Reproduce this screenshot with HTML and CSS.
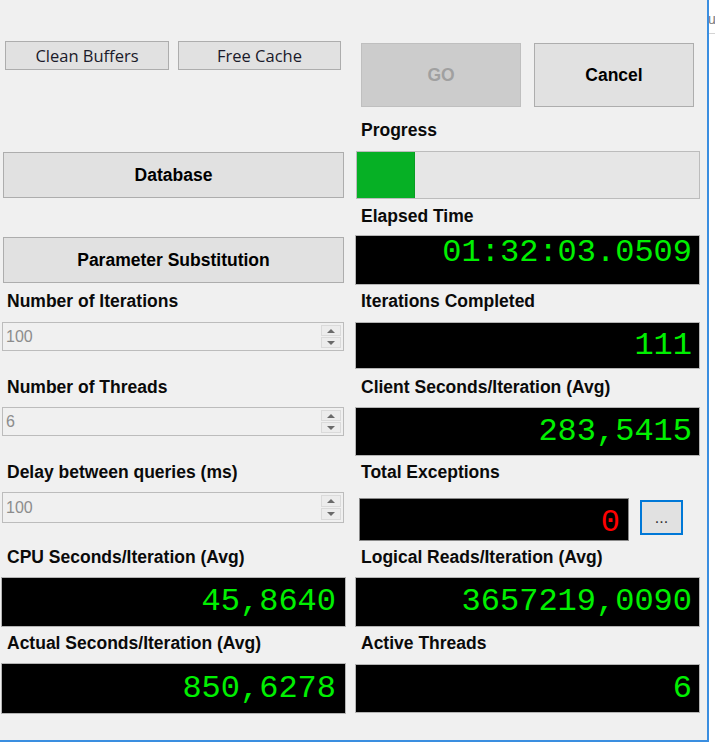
FILE: index.html
```html
<!DOCTYPE html>
<html>
<head>
<meta charset="utf-8">
<title>Stress Test</title>
<link rel="stylesheet" href="styles.css">
</head>
<body>
<div class="screen">
  <div class="window">
    <div class="col col-left">
      <div class="tool-row">
        <div class="btn btn-small btn-clean">Clean Buffers</div>
        <div class="btn btn-small btn-free">Free Cache</div>
      </div>
      <div class="btn btn-wide btn-db">Database</div>
      <div class="btn btn-wide btn-param">Parameter Substitution</div>

      <div class="label l-first">Number of Iterations</div>
      <div class="spin s-first">
        <span class="spin-val">100</span>
        <span class="spin-btns"><span class="spin-b"><i class="tri-up"></i></span><span class="spin-b"><i class="tri-down"></i></span></span>
      </div>

      <div class="label l-next">Number of Threads</div>
      <div class="spin s-next">
        <span class="spin-val">6</span>
        <span class="spin-btns"><span class="spin-b"><i class="tri-up"></i></span><span class="spin-b"><i class="tri-down"></i></span></span>
      </div>

      <div class="label l-next">Delay between queries (ms)</div>
      <div class="spin s-next s-tall">
        <span class="spin-val">100</span>
        <span class="spin-btns"><span class="spin-b"><i class="tri-up"></i></span><span class="spin-b"><i class="tri-down"></i></span></span>
      </div>

      <div class="label l-cpu">CPU Seconds/Iteration (Avg)</div>
      <div class="display d-left d-cpu">45,8640</div>

      <div class="label l-actual">Actual Seconds/Iteration (Avg)</div>
      <div class="display d-left d-actual">850,6278</div>
    </div>

    <div class="col col-right">
      <div class="run-row">
        <div class="btn btn-run btn-go">GO</div>
        <div class="btn btn-run btn-cancel">Cancel</div>
      </div>

      <div class="label r-progress">Progress</div>
      <div class="progress"><div class="progress-fill" style="width:17%"></div></div>

      <div class="label r-elapsed">Elapsed Time</div>
      <div class="display d-right d-elapsed">01:32:03.0509</div>

      <div class="label r-iter">Iterations Completed</div>
      <div class="display d-right d-iter">111</div>

      <div class="label r-client">Client Seconds/Iteration (Avg)</div>
      <div class="display d-right d-client">283,5415</div>

      <div class="label r-exc">Total Exceptions</div>
      <div class="exc-row">
        <div class="display d-exc">0</div>
        <div class="btn btn-more">...</div>
      </div>

      <div class="label r-logical">Logical Reads/Iteration (Avg)</div>
      <div class="display d-right d-logical">3657219,0090</div>

      <div class="label r-active">Active Threads</div>
      <div class="display d-right d-active">6</div>
    </div>
  </div>
  <div class="side"><span class="side-text">u</span></div>
</div>
</body>
</html>
```

FILE: styles.css
```css
* { box-sizing: border-box; }

html, body {
  margin: 0;
  padding: 0;
  background: #ffffff;
}

body {
  font-family: "Liberation Sans", Arial, sans-serif;
  color: #000;
}

.screen {
  display: flex;
  align-items: flex-start;
  width: 715px;
  height: 744px;
  overflow: hidden;
}

.window {
  width: 709px;
  height: 742px;
  flex: none;
  background: #f0f0f0;
  border-right: 2px solid #3a8ee0;
  border-bottom: 2px solid #3a8ee0;
  display: flex;
}

.side {
  flex: 1;
  height: 34px;
  border-bottom: 1px solid #d4d4d4;
  overflow: hidden;
  padding-top: 12px;
}

.side-text {
  display: block;
  font-size: 14px;
  line-height: 14px;
  color: #7a7a7a;
  margin-left: -1px;
}

.col {
  display: flex;
  flex-direction: column;
}

.col-left { width: 355px; }
.col-right { flex: 1; }

/* Buttons */
.btn {
  display: flex;
  align-items: center;
  justify-content: center;
  background: #e1e1e1;
  border: 1px solid #adadad;
  color: #000;
  white-space: nowrap;
}

.tool-row {
  display: flex;
  gap: 9px;
  margin-top: 41px;
  margin-left: 5px;
}

.btn-small {
  height: 29px;
  font-family: "Open Sans", "Liberation Sans", sans-serif;
  font-size: 16.5px;
  color: #1a1a2a;
}

.btn-clean { width: 164px; }
.btn-free { width: 163px; }

.btn-wide {
  width: 341px;
  height: 46px;
  margin-left: 3px;
  font-weight: bold;
  font-size: 17.5px;
}

.btn-db { margin-top: 82px; }
.btn-param { margin-top: 39px; }

.run-row {
  display: flex;
  gap: 13px;
  margin-top: 43px;
  margin-left: 6px;
}

.btn-run {
  width: 160px;
  height: 64px;
  font-weight: bold;
  font-size: 17.5px;
}

.btn-go {
  background: #cccccc;
  border-color: #bfbfbf;
  color: #a0a0a0;
}

/* Labels */
.label {
  height: 20px;
  line-height: 20px;
  font-size: 17.5px;
  font-weight: bold;
  white-space: nowrap;
  color: #0a0a0a;
}

.col-left .label { padding-left: 7px; }
.col-right .label { padding-left: 6px; }

.l-first { margin-top: 8px; }
.l-next { margin-top: 26px; }
.l-cpu { margin-top: 24px; }
.l-actual { margin-top: 6px; }

.r-progress { margin-top: 13px; }
.r-elapsed { margin-top: 7px; }
.r-iter { margin-top: 6px; }
.r-client { margin-top: 8px; }
.r-exc { margin-top: 6px; }
.r-logical { margin-top: 6px; }
.r-active { margin-top: 6px; }

/* Spinners */
.spin {
  width: 342px;
  height: 29px;
  margin-left: 2px;
  border: 1px solid #bcbcbc;
  background: #f0f0f0;
  display: flex;
  align-items: center;
  justify-content: space-between;
  padding: 2px 2px 2px 3px;
}

.s-first { margin-top: 11px; }
.s-next { margin-top: 10px; }
.s-tall { height: 31px; }

.spin-val {
  font-size: 16px;
  color: #8c8c8c;
}

.spin-btns {
  display: flex;
  flex-direction: column;
  justify-content: space-between;
  height: 100%;
  width: 20px;
}

.spin-b {
  flex: 1;
  display: flex;
  align-items: center;
  justify-content: center;
  background: #ececec;
  border: 1px solid #dadada;
}

.spin-b + .spin-b { margin-top: 1px; }

.tri-up, .tri-down {
  width: 0;
  height: 0;
  border-left: 4px solid transparent;
  border-right: 4px solid transparent;
}

.tri-up { border-bottom: 4px solid #6a6a6a; }
.tri-down { border-top: 4px solid #6a6a6a; }

/* Progress */
.progress {
  width: 344px;
  height: 48px;
  margin-top: 11px;
  margin-left: 1px;
  border: 1px solid #bcbcbc;
  background: #e6e6e6;
  display: flex;
}

.progress-fill {
  height: 100%;
  background: #06b025;
  border-right: 1px solid #0a9d24;
}

/* Displays */
.display {
  background: #000;
  border: 1px solid #b4b4b4;
  color: #00f000;
  font-family: "Liberation Mono", "Courier New", monospace;
  font-size: 32px;
  line-height: 32px;
  display: flex;
  align-items: center;
  justify-content: flex-end;
  white-space: nowrap;
}

.d-left {
  width: 345px;
  margin-left: 1px;
  padding-right: 9px;
}

.d-cpu { height: 50px; margin-top: 10px; }
.d-actual { height: 51px; margin-top: 10px; }

.d-right {
  width: 345px;
  padding-right: 7px;
}

.d-elapsed {
  height: 50px;
  margin-top: 9px;
  align-items: flex-start;
  padding-top: 1px;
}

.d-iter { height: 47px; margin-top: 11px; }
.d-client { height: 49px; margin-top: 10px; }
.d-logical { height: 50px; margin-top: 10px; }
.d-active { height: 49px; margin-top: 11px; }

.exc-row {
  display: flex;
  align-items: flex-start;
  margin-top: 16px;
  margin-left: 4px;
}

.d-exc {
  width: 270px;
  height: 43px;
  color: #ff0000;
  border-color: #8a8a8a;
  align-items: flex-end;
  padding-right: 8px;
  padding-bottom: 1px;
}

.btn-more {
  width: 43px;
  height: 35px;
  margin-top: 2px;
  margin-left: 11px;
  border: 2px solid #0078d7;
  font-size: 16px;
  color: #333;
}
```
